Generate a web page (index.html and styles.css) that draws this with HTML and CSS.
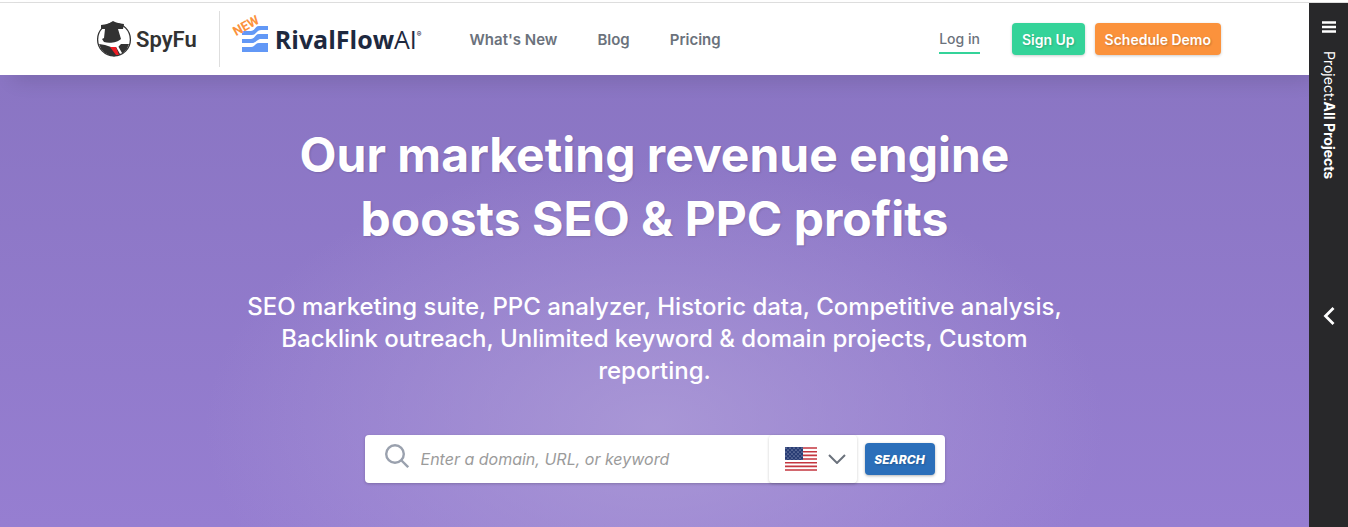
FILE: index.html
```
<!DOCTYPE html>
<html lang="en">

<head>
    <meta charset="UTF-8">
    <meta name="viewport" content="width=device-width, initial-scale=1.0">
    <title>SpyFu</title>
    <link rel="stylesheet" href="styles.css">
</head>

<body>
    <div class="page">
        <header class="header">
            <a href="#" class="spyfu">
                <svg class="spyfu-icon" viewBox="0 0 36 36" aria-hidden="true">
                    <circle cx="18" cy="18.5" r="16.4" fill="#fff" stroke="#323232" stroke-width="1.3" />
                    <path d="M3 23 L9 24 L15 26 L22 26 L25 23 L33 23 A16.8 16.8 0 0 1 18 35.4 A16.8 16.8 0 0 1 3 23Z" fill="#323232" />
                    <path d="M5 4 L12 3 L17 0 L21 2 L28 3 L27 8 L22 8 L25 18 C22 21 14 23 8 21 L6 18 L8 17 L9 8 L5 8Z" fill="#323232" />
                    <path d="M14 26 L20 26 L22 25 L26 32 L24 33 L20 26Z" fill="#fff" />
                    <path d="M14 26 L20 26 L23 34 L20 34Z" fill="#ed1c24" />
                </svg>
                <span class="spyfu-name">SpyFu</span>
            </a>
            <a href="#" class="rival">
                <span class="rival-icon">
                    <svg viewBox="0 0 26 26" aria-hidden="true">
                        <path d="M0 5 H9 C13 5 13 0 17 0 H26 V4 H19 C15 4 14 9 10 9 H0Z" fill="#6298f6" />
                        <path d="M0 13 H9 C13 13 13 8 17 8 H26 V13 H19 C15 13 14 17 10 17 H0Z" fill="#6298f6" />
                        <path d="M0 21 H9 C13 21 13 17 17 17 H26 V26 H0Z" fill="#6298f6" />
                    </svg>
                    <span class="rival-new">NEW</span>
                </span>
                <span class="rival-name">RivalFlow<span class="rival-ai">AI</span></span>
                <span class="rival-mark">®</span>
            </a>
            <nav class="nav">
                <a href="#">What's New</a>
                <a href="#">Blog</a>
                <a href="#">Pricing</a>
            </nav>
            <div class="account">
                <a href="#" class="login">Log in</a>
                <button type="button" class="btn btn-green">Sign Up</button>
                <button type="button" class="btn btn-orange">Schedule Demo</button>
            </div>
        </header>

        <main class="hero">
            <h1>Our marketing revenue engine boosts SEO &amp; PPC profits</h1>
            <p>SEO marketing suite, PPC analyzer, Historic data, Competitive analysis, Backlink outreach, Unlimited keyword &amp; domain projects, Custom reporting.</p>
            <form class="search">
                <label for="query" class="search-icon">
                    <svg viewBox="0 0 24 24" aria-label="Search">
                        <circle cx="10" cy="10" r="8.8" />
                        <path d="M16 16 L23.2 23.2" />
                    </svg>
                </label>
                <input type="text" id="query" placeholder="Enter a domain, URL, or keyword">
                <button type="button" class="country" aria-label="Country: United States">
                    <svg class="flag" viewBox="0 0 32 24" aria-hidden="true">
                        <defs>
                            <pattern id="stars" width="4" height="4" patternUnits="userSpaceOnUse">
                                <rect width="4" height="4" fill="#283c74" />
                                <circle cx="1" cy="1" r="0.6" fill="#c9cfe0" />
                                <circle cx="3" cy="3" r="0.6" fill="#c9cfe0" />
                            </pattern>
                        </defs>
                        <rect width="32" height="24" fill="#fff" />
                        <path d="M0 1H32M0 4.7H32M0 8.4H32M0 12H32M0 15.7H32M0 19.4H32M0 23H32" stroke="#c4363f" stroke-width="1.6" />
                        <rect width="18" height="13" fill="url(#stars)" />
                    </svg>
                    <svg class="chevron" viewBox="0 0 18 10" aria-hidden="true">
                        <path d="M1 1 L9 9 L17 1" />
                    </svg>
                </button>
                <button type="submit" class="search-btn">SEARCH</button>
            </form>
        </main>
    </div>

    <aside class="sidebar">
        <button type="button" class="side-btn" aria-label="Menu">
            <svg width="14" height="12" viewBox="0 0 14 12">
                <path d="M0 1.5H14M0 6H14M0 10.5H14" stroke="#fff" stroke-width="2.6" />
            </svg>
        </button>
        <div class="project">Project:<b>All Projects</b></div>
        <button type="button" class="side-btn side-arrow" aria-label="Open sidebar">
            <svg width="12" height="18" viewBox="0 0 12 18">
                <path d="M10.5 1 L2.5 9 L10.5 17" fill="none" stroke="#fff" stroke-width="2.8" />
            </svg>
        </button>
    </aside>
</body>

</html>
```
FILE: styles.css
```
* {
    box-sizing: border-box;
}

body {
    margin: 0;
    padding-top: 3px;
    min-height: 100vh;
    display: flex;
    font-family: Inter, "Liberation Sans", sans-serif;
    background: linear-gradient(#fff 2px, #dedede 2px, #dedede 3px, #fff 3px);
}

a {
    color: inherit;
    text-decoration: none;
}

button {
    font-family: inherit;
    border: none;
    cursor: pointer;
}

svg {
    display: block;
}

.page {
    flex: 1;
    display: flex;
    flex-direction: column;
}

/* header */
.header {
    position: relative;
    z-index: 1;
    height: 72px;
    padding: 0 88px 0 96px;
    display: flex;
    align-items: center;
    background: #fff;
    color: #6b727c;
    font-size: 15px;
    font-weight: 600;
    box-shadow: 8px 10px 20px -5px rgba(0, 0, 0, 0.12);
}

.spyfu {
    display: flex;
    align-items: center;
    gap: 4px;
    height: 56px;
    padding-right: 22px;
    border-right: 1px solid #dedede;
}

.spyfu-icon {
    width: 36px;
    height: 36px;
}

.spyfu-name {
    font-family: Roboto, sans-serif;
    font-size: 22px;
    font-weight: 600;
    color: #323232;
}

.rival {
    display: flex;
    align-items: center;
    margin-left: 22px;
    color: #1e293f;
}

.rival-icon {
    position: relative;
    width: 26px;
    margin-right: 7px;
}

.rival-new {
    position: absolute;
    top: -7px;
    left: -10px;
    font-family: Roboto, sans-serif;
    font-size: 13px;
    line-height: 13px;
    font-weight: 700;
    color: #fb923c;
    transform: rotate(-29deg);
}

.rival-name {
    font-family: "Open Sans", sans-serif;
    font-size: 25px;
    font-weight: 700;
}

.rival-ai {
    font-weight: 400;
}

.rival-mark {
    align-self: flex-start;
    padding-top: 8px;
    font-size: 7px;
}

.nav {
    display: flex;
    gap: 40px;
    margin-left: 48px;
}

.account {
    display: flex;
    align-items: center;
    gap: 10px;
    margin-left: auto;
}

.login {
    margin-right: 22px;
    padding: 6px 0 5px;
    font-size: 14px;
    font-weight: 500;
    border-bottom: 2px solid #34d399;
}

.btn {
    height: 32px;
    padding: 0 10px;
    border-radius: 4px;
    font-size: 14px;
    font-weight: 600;
    color: #fff;
    text-shadow: 1px 1px 2px rgba(0, 0, 0, 0.2);
    box-shadow: 0 1px 3px rgba(0, 0, 0, 0.2);
}

.btn-green {
    background: #34d399;
}

.btn-orange {
    background: #fb923c;
}

/* hero */
.hero {
    flex: 1;
    padding: 48px 24px 44px;
    display: flex;
    flex-direction: column;
    align-items: center;
    color: #fff;
    text-align: center;
    background:
        radial-gradient(ellipse 450px 270px at 50% 352px, rgba(174, 157, 216, 0.8), rgba(174, 157, 216, 0)),
        linear-gradient(#8a75c3, #967ed1);
}

.hero h1 {
    max-width: 780px;
    margin: 0;
    font-size: 48px;
    line-height: 64px;
    font-weight: 700;
    text-shadow: 1px 1px 2px rgba(0, 0, 0, 0.15);
}

.hero p {
    max-width: 832px;
    margin: 40px 0 48px;
    font-size: 24px;
    line-height: 32px;
    font-weight: 500;
}

.search {
    width: 100%;
    max-width: 580px;
    height: 48px;
    display: flex;
    align-items: center;
    padding-right: 10px;
    border-radius: 4px;
    background: #fff;
    box-shadow: 0 1px 3px rgba(0, 0, 0, 0.2);
}

.search-icon {
    padding: 0 12px 6px 20px;
}

.search-icon svg {
    width: 24px;
    height: 24px;
    fill: none;
    stroke: #9aa1ae;
    stroke-width: 2.4;
}

.search input {
    flex: 1;
    min-width: 0;
    height: 48px;
    padding: 0;
    border: none;
    outline: none;
    background: none;
    font-family: inherit;
    font-size: 16px;
    font-style: italic;
    color: #333;
}

.search input::placeholder {
    color: #9b9b9b;
}

.country {
    height: 48px;
    width: 88px;
    display: flex;
    align-items: center;
    justify-content: space-between;
    margin-right: 8px;
    padding: 0 11px 0 16px;
    border-radius: 4px;
    background: #fff;
    box-shadow: 0 1px 3px rgba(0, 0, 0, 0.2);
}

.flag {
    width: 32px;
    height: 24px;
}

.chevron {
    width: 18px;
    height: 10px;
    fill: none;
    stroke: #6b727c;
    stroke-width: 2;
}

.search-btn {
    width: 70px;
    height: 32px;
    padding: 0;
    border-radius: 4px;
    background: #2b6fba;
    color: #fff;
    font-size: 12px;
    font-weight: 800;
    font-style: italic;
    text-shadow: 1px 1px 2px rgba(0, 0, 0, 0.2);
    box-shadow: 0 1px 3px rgba(0, 0, 0, 0.3);
}

/* project sidebar */
.sidebar {
    position: relative;
    z-index: 2;
    width: 39px;
    display: flex;
    flex-direction: column;
    align-items: center;
    padding-top: 18px;
    background: #28282a;
    color: #fff;
}

.side-btn {
    padding: 0;
    background: none;
}

.project {
    margin-top: 18px;
    writing-mode: vertical-rl;
    font-size: 14px;
    line-height: 18px;
}

.side-arrow {
    margin-top: 128px;
}
```
